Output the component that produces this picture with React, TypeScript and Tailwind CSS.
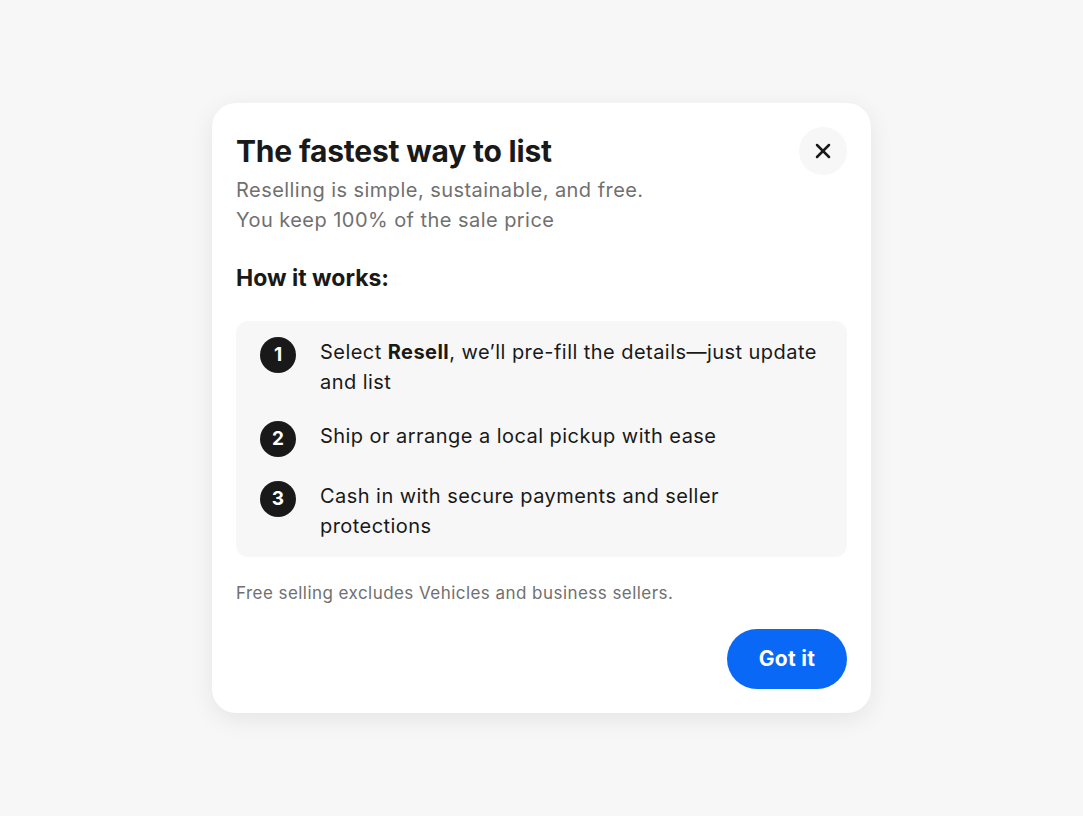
import { X } from 'lucide-react'

const steps = [
  {
    n: 1,
    body: (
      <>
        Select <span className="font-bold">Resell</span>, we’ll pre-fill the details—just update and list
      </>
    ),
  },
  { n: 2, body: <>Ship or arrange a local pickup with ease</> },
  { n: 3, body: <>Cash in with secure payments and seller protections</> },
]

function StepRow({ n, children }: { n: number; children: React.ReactNode }) {
  return (
    <li className="flex items-start gap-6">
      <span className="flex h-9 w-9 shrink-0 items-center justify-center rounded-full bg-[#191919] text-[19px] font-bold text-white">
        {n}
      </span>
      <p className="text-[20px] leading-[30px] tracking-[0.45px] text-[#191919]">{children}</p>
    </li>
  )
}

export default function App() {
  return (
    <div
      className="flex min-h-[816px] w-full items-start justify-center bg-[#f7f7f7] pt-[103px]"
      style={{ fontFamily: 'Inter, "Noto Sans", sans-serif' }}
    >
      <div className="w-[659px] rounded-[24px] bg-white p-6 shadow-[0_6px_24px_rgba(0,0,0,0.08)]">
        <div className="flex items-start justify-between">
          <div>
            <h2 className="text-[30px] font-bold leading-[48px] tracking-[-0.2px] text-[#191919]">
              The fastest way to list
            </h2>
            <p className="text-[20px] leading-[30px] tracking-[0.45px] text-[#707070]">
              Reselling is simple, sustainable, and free.
              <br />
              You keep 100% of the sale price
            </p>
          </div>
          <button className="flex h-12 w-12 items-center justify-center rounded-full bg-[#f7f7f7] text-[#191919]">
            <X size={24} strokeWidth={2.5} />
          </button>
        </div>

        <h3 className="mt-[27px] text-[23px] font-bold leading-[32px] text-[#191919]">How it works:</h3>

        <ul className="mt-[27px] flex flex-col gap-6 rounded-xl bg-[#f7f7f7] py-4 pl-6 pr-6">
          {steps.map((s) => (
            <StepRow key={s.n} n={s.n}>
              {s.body}
            </StepRow>
          ))}
        </ul>

        <p className="mt-6 text-[17px] leading-[24px] tracking-[0.45px] text-[#707070]">
          Free selling excludes Vehicles and business sellers.
        </p>

        <div className="mt-6 flex justify-end">
          <button className="h-[60px] w-[120px] rounded-full bg-[#0968f6] text-[21px] font-bold tracking-[0.3px] text-white">
            Got it
          </button>
        </div>
      </div>
    </div>
  )
}
